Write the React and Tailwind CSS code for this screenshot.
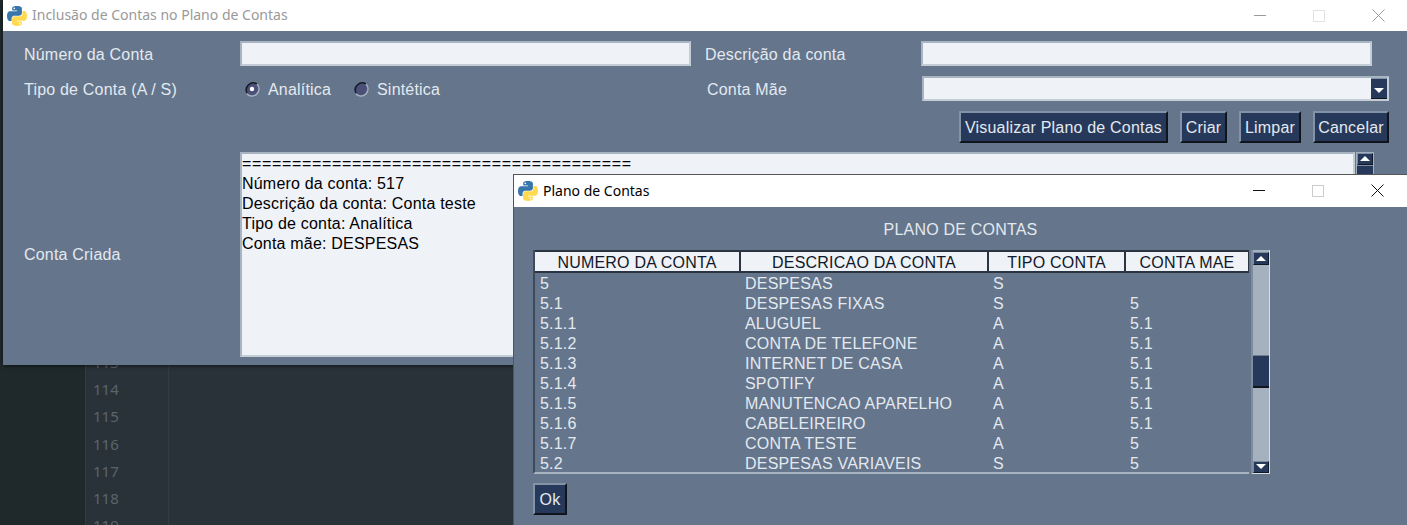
const BODY = 'font-["Liberation_Sans",Arial,sans-serif] tracking-[0.2px]';
const UI = 'font-["Noto_Sans","Open_Sans",sans-serif] tracking-normal';

const accounts = [
  ['5', 'DESPESAS', 'S', ''],
  ['5.1', 'DESPESAS FIXAS', 'S', '5'],
  ['5.1.1', 'ALUGUEL', 'A', '5.1'],
  ['5.1.2', 'CONTA DE TELEFONE', 'A', '5.1'],
  ['5.1.3', 'INTERNET DE CASA', 'A', '5.1'],
  ['5.1.4', 'SPOTIFY', 'A', '5.1'],
  ['5.1.5', 'MANUTENCAO APARELHO', 'A', '5.1'],
  ['5.1.6', 'CABELEIREIRO', 'A', '5.1'],
  ['5.1.7', 'CONTA TESTE', 'A', '5'],
  ['5.2', 'DESPESAS VARIAVEIS', 'S', '5'],
];

const PythonLogo = () => (
  <svg width="20" height="20" viewBox="0 0 110 110" className="shrink-0">
    <path
      fillRule="evenodd"
      fill="#3776ab"
      d="M54.9 0C26.8 0 28.6 12.2 28.6 12.2l0 12.6h26.8v3.8H18C18 28.6 0 26.6 0 55c0 28.4 15.7 27.4 15.7 27.4h9.4V69.2s-.5-15.7 15.4-15.7h26.6s14.9.2 14.9-14.4V14.9S84.3 0 54.9 0zM40.1 8.5c2.7 0 4.8 2.2 4.8 4.8s-2.2 4.8-4.8 4.8-4.8-2.2-4.8-4.8 2.2-4.8 4.8-4.8z"
    />
    <path
      fillRule="evenodd"
      fill="#ffd94f"
      transform="rotate(180 55 55)"
      d="M54.9 0C26.8 0 28.6 12.2 28.6 12.2l0 12.6h26.8v3.8H18C18 28.6 0 26.6 0 55c0 28.4 15.7 27.4 15.7 27.4h9.4V69.2s-.5-15.7 15.4-15.7h26.6s14.9.2 14.9-14.4V14.9S84.3 0 54.9 0zM40.1 8.5c2.7 0 4.8 2.2 4.8 4.8s-2.2 4.8-4.8 4.8-4.8-2.2-4.8-4.8 2.2-4.8 4.8-4.8z"
    />
  </svg>
);

const WindowControls = ({ color, boxColor }) => (
  <svg width="132" height="20" viewBox="0 0 132 20" fill="none" className="shrink-0">
    <path d="M0 9.5h12" stroke={color} />
    <rect x="59.5" y="4.5" width="11" height="11" stroke={boxColor} />
    <path d="M118.5 3.5l12 12M130.5 3.5l-12 12" stroke={color} />
  </svg>
);

const ArrowUp = () => (
  <svg width="10" height="6" viewBox="0 0 10 6"><path d="M5 0l5 5H0z" fill="#fff" /></svg>
);
const ArrowDown = () => (
  <svg width="10" height="6" viewBox="0 0 10 6"><path d="M0 0h10L5 5z" fill="#fff" /></svg>
);

const ScrollButton = ({ children, className = '' }) => (
  <div className={`w-4 h-[12px] bg-[#27395a] border-t border-l border-[#7f8ca0] border-r border-b border-r-[#111827] border-b-[#111827] flex items-center justify-center ${className}`}>
    {children}
  </div>
);

const Button = ({ children, className = '' }) => (
  <div className={`h-8 flex items-center justify-center bg-[#27395a] text-[#e3e9f0] text-base leading-[22px] border-2 border-t-[#8492a6] border-l-[#8492a6] border-r-[#10141d] border-b-[#10141d] ${className}`}>
    <span className="pt-[2px]">{children}</span>
  </div>
);

const Field = ({ className = '', children }) => (
  <div className={`h-[25px] bg-[#eff2f7] border-2 border-t-[#a9b4c2] border-l-[#a9b4c2] border-r-[#c4ccd6] border-b-[#c4ccd6] ${className}`}>{children}</div>
);

const Radio = ({ checked }) => (
  <svg width="16" height="16" viewBox="0 0 16 16" className="shrink-0">
    <circle cx="8" cy="8" r="6" fill="#4c5079" />
    <path d="M3 12A7 7 0 0 1 13 3" stroke="#161a26" strokeWidth="1.6" fill="none" />
    <path d="M13 3A7 7 0 0 1 3 13" stroke="#a9b4c2" strokeWidth="1.2" fill="none" />
    {checked && <circle cx="8" cy="8" r="2.2" fill="#fff" />}
  </svg>
);

const MainWindow = () => (
  <div className={`absolute left-[3px] top-0 w-[1404px] h-[365px] bg-[#65758b] shadow-[0_1px_4px_rgba(0,0,0,0.6)] ${BODY}`}>
    <div className="h-[31px] bg-white flex items-center pl-[4px] pr-[21px]">
      <PythonLogo />
      <span className={`ml-[5px] -mt-[2px] text-sm text-[#999] ${UI}`}>Inclusão de Contas no Plano de Contas</span>
      <div className="ml-auto"><WindowControls color="#9a9a9a" boxColor="#e2e2e2" /></div>
    </div>

    <div className="pl-[21px] pt-[10px] text-base leading-[22px] text-[#e3e9f0]">
      <div className="flex items-center">
        <span className="w-[216px] pt-[2px]">Número da Conta</span>
        <Field className="w-[451px]" />
        <span className="ml-[14px] w-[216px] pt-[2px]">Descrição da conta</span>
        <Field className="w-[451px]" />
      </div>

      <div className="flex items-center mt-[10px]">
        <span className="w-[216px] pt-[2px]">Tipo de Conta (A / S)</span>
        <div className="w-[451px] flex items-center pl-[4px]">
          <Radio checked />
          <span className="ml-[8px] w-[85px] pt-[2px]">Analítica</span>
          <Radio />
          <span className="ml-[8px] pt-[2px]">Sintética</span>
        </div>
        <span className="ml-[16px] w-[215px] pt-[2px]">Conta Mãe</span>
        <Field className="w-[467px] flex justify-end">
          <div className="w-4 h-[21px] bg-[#27395a] flex items-end justify-center pb-[4px] border-t border-t-[#8492a6] border-b border-b-[#10141d]">
            <ArrowDown />
          </div>
        </Field>
      </div>

      <div className="flex justify-end gap-3 pr-[18px] mt-[10px]">
        <Button className="w-[209px]">Visualizar Plano de Contas</Button>
        <Button className="w-[47px]">Criar</Button>
        <Button className="w-[62px]">Limpar</Button>
        <Button className="w-[76px]">Cancelar</Button>
      </div>

      <div className="flex items-stretch mt-[9px]">
        <span className="w-[216px] self-center">Conta Criada</span>
        <div className="w-[1115px] h-[205px] bg-[#eff2f7] border-2 border-t-[#a9b4c2] border-l-[#a9b4c2] border-r-[#c4ccd6] border-b-[#c4ccd6] text-black leading-5 overflow-hidden">
          <div className="tracking-[0.65px]">=======================================</div>
          <div>Número da conta: 517</div>
          <div>Descrição da conta: Conta teste</div>
          <div>Tipo de conta: Analítica</div>
          <div>Conta mãe: DESPESAS</div>
        </div>
        <div className="w-[18px] ml-[1px] bg-[#a6b1bf] p-px">
          <ScrollButton><ArrowUp /></ScrollButton>
          <div className="w-4 h-[60px] bg-[#27395a] border-t border-[#7f8ca0]" />
        </div>
      </div>
    </div>
  </div>
);

const AccountsTable = () => (
  <div className="flex">
    <div className="w-[716px] h-[224px] border-l-2 border-l-[#3f4a5a] border-b-2 border-b-[#a9b4c2] overflow-hidden">
      <div className="grid grid-cols-[206px_248px_137px_124px] grid-rows-[21px] h-[23px] text-[#111827] border-t-2 border-[#2b3442]">
        {['NUMERO DA CONTA', 'DESCRICAO DA CONTA', 'TIPO CONTA', 'CONTA MAE'].map((title) => (
          <div key={title} className="bg-[#eff2f7] flex items-center justify-center leading-none pt-[3px] border-r-2 border-b-2 border-r-[#2b3442] border-b-[#2b3442]">
            {title}
          </div>
        ))}
      </div>
      <div className="pt-px">
        {accounts.map((row) => (
          <div key={row[0]} className="grid grid-cols-[205px_248px_137px_124px] h-5 leading-5 text-[#e3e9f0]">
            {row.map((cell, i) => (
              <span key={i} className="pl-[5px]">{cell}</span>
            ))}
          </div>
        ))}
      </div>
    </div>

    <div className="w-[19px] h-[224px] ml-[2px] bg-[#a6b1bf] border-l-2 border-l-[#7f8ca0] border-r border-r-[#d5dde5] border-b border-b-[#d5dde5] flex flex-col">
      <ScrollButton className="h-[13px] mt-[2px]"><ArrowUp /></ScrollButton>
      <div className="mt-[90px] w-4 h-[33px] bg-[#27395a] border-t border-[#6f7d92] border-b-2 border-b-[#10141d]" />
      <ScrollButton className="h-[12px] mt-auto"><ArrowDown /></ScrollButton>
    </div>
  </div>
);

const PlanoWindow = () => (
  <div className={`absolute left-[513px] top-[174px] w-[894px] h-[351px] bg-[#65758b] border-l border-t border-[#555] ${BODY}`}>
    <div className="h-[32px] bg-white flex items-center pl-[4px] pr-[22px]">
      <PythonLogo />
      <span className={`ml-[5px] text-sm text-black ${UI}`}>Plano de Contas</span>
      <div className="ml-auto"><WindowControls color="#111" boxColor="#ccc" /></div>
    </div>

    <div className="pl-[19px] text-base">
      <div className="w-[855px] pt-[11px] h-[43px] text-center text-[#e3e9f0]">PLANO DE CONTAS</div>
      <AccountsTable />
      <Button className="w-[34px] mt-[9px]">Ok</Button>
    </div>
  </div>
);

const EditorBackground = () => (
  <div className="h-[525px] flex bg-[#2a3239] overflow-hidden">
    <div className="w-[85px] bg-[#1f292c]" />
    <div className="w-[84px] border-l border-r border-[#343c43] pt-[349px] pl-[7px] font-['Noto_Sans',sans-serif] text-[15px] leading-[27.2px] text-[#59656b]">
      {[113, 114, 115, 116, 117, 118, 119].map((n) => (
        <div key={n}>{n}</div>
      ))}
    </div>
  </div>
);

export default function App() {
  return (
    <div className="relative w-[1407px] h-[525px] overflow-hidden">
      <EditorBackground />
      <MainWindow />
      <PlanoWindow />
    </div>
  );
}
